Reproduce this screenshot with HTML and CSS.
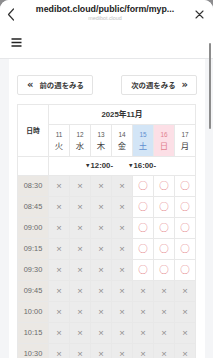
FILE: index.html
```html
<!DOCTYPE html>
<html lang="ja">
<head>
<meta charset="utf-8">
<title>medibot.cloud</title>
<link rel="stylesheet" href="styles.css">
</head>
<body>
<div class="sheet">
  <div class="topbar">
    <svg class="back" width="8" height="13" viewBox="0 0 8 13"><path d="M6.5 1 L1.5 6.5 L6.5 12" fill="none" stroke="#333" stroke-width="1.2" stroke-linecap="round" stroke-linejoin="round"/></svg>
    <div class="url">
      <div class="url-main">medibot.cloud/public/form/myp...</div>
      <div class="url-sub">medibot.cloud</div>
    </div>
    <svg class="close" width="9" height="9" viewBox="0 0 9 9"><path d="M1 1 L8 8 M8 1 L1 8" fill="none" stroke="#333" stroke-width="1.1" stroke-linecap="round"/></svg>
  </div>
  <div class="pagehead">
    <svg class="menu" width="11" height="9" viewBox="0 0 11 9"><path d="M0.5 1 H10.5 M0.5 4.5 H10.5 M0.5 8 H10.5" stroke="#222" stroke-width="1.3"/></svg>
  </div>
  <main class="content">
    <div class="panel">
      <div class="nav">
        <button class="navbtn"><span class="arr">«</span>前の週をみる</button>
        <button class="navbtn next">次の週をみる<span class="arr">»</span></button>
      </div>
      <table class="cal">
        <colgroup><col class="c-time"><col class="c-day"><col class="c-day"><col class="c-day"><col class="c-day"><col class="c-day"><col class="c-day"><col class="c-day"></colgroup>
        <tr class="r-month">
          <th class="h-dt" rowspan="2">日時</th>
          <th class="h-month" colspan="7">2025年11月</th>
        </tr>
        <tr class="r-days">
          <th class="d"><span class="dn">11</span><span class="dw">火</span></th>
          <th class="d"><span class="dn">12</span><span class="dw">水</span></th>
          <th class="d"><span class="dn">13</span><span class="dw">木</span></th>
          <th class="d"><span class="dn">14</span><span class="dw">金</span></th>
          <th class="d sat"><span class="dn">15</span><span class="dw">土</span></th>
          <th class="d sun"><span class="dn">16</span><span class="dw">日</span></th>
          <th class="d"><span class="dn">17</span><span class="dw">月</span></th>
        </tr>
        <tr class="r-marks">
          <td class="blank"></td>
          <td class="marks" colspan="7"><div class="marks-in"><span class="mk"><span class="tri">▼</span>12:00-</span><span class="mk"><span class="tri">▼</span>16:00-</span></div></td>
        </tr>
        <tr class="r-slot"><td class="t">08:30</td><td class="x">×</td><td class="x">×</td><td class="x">×</td><td class="x">×</td><td class="o">○</td><td class="o">○</td><td class="o">○</td></tr>
        <tr class="r-slot"><td class="t">08:45</td><td class="x">×</td><td class="x">×</td><td class="x">×</td><td class="x">×</td><td class="o">○</td><td class="o">○</td><td class="o">○</td></tr>
        <tr class="r-slot"><td class="t">09:00</td><td class="x">×</td><td class="x">×</td><td class="x">×</td><td class="x">×</td><td class="o">○</td><td class="o">○</td><td class="o">○</td></tr>
        <tr class="r-slot"><td class="t">09:15</td><td class="x">×</td><td class="x">×</td><td class="x">×</td><td class="x">×</td><td class="o">○</td><td class="o">○</td><td class="o">○</td></tr>
        <tr class="r-slot"><td class="t">09:30</td><td class="x">×</td><td class="x">×</td><td class="x">×</td><td class="x">×</td><td class="o">○</td><td class="o">○</td><td class="o">○</td></tr>
        <tr class="r-slot"><td class="t">09:45</td><td class="x">×</td><td class="x">×</td><td class="x">×</td><td class="x">×</td><td class="x">×</td><td class="x">×</td><td class="x">×</td></tr>
        <tr class="r-slot"><td class="t">10:00</td><td class="x">×</td><td class="x">×</td><td class="x">×</td><td class="x">×</td><td class="x">×</td><td class="x">×</td><td class="x">×</td></tr>
        <tr class="r-slot"><td class="t">10:15</td><td class="x">×</td><td class="x">×</td><td class="x">×</td><td class="x">×</td><td class="x">×</td><td class="x">×</td><td class="x">×</td></tr>
        <tr class="r-slot"><td class="t">10:30</td><td class="x">×</td><td class="x">×</td><td class="x">×</td><td class="x">×</td><td class="x">×</td><td class="x">×</td><td class="x">×</td></tr>
      </table>
    </div>
  </main>
  <div class="scrollbar"></div>
</div>
</body>
</html>
```
FILE: styles.css
```css
* { box-sizing: border-box; }
html, body {
  margin: 0;
  padding: 0;
  height: 100%;
  overflow: hidden;
  background: #8d8d8f;
}
body {
  font-family: "Liberation Sans", "Noto Sans CJK JP", sans-serif;
  color: #333;
}
.sheet {
  position: relative;
  height: 100%;
  background: #f4f5f7;
  border-radius: 9px 9px 0 0;
  overflow: hidden;
}
.topbar {
  height: 28px;
  background: #fff;
  display: flex;
  align-items: flex-start;
  padding: 0 9px 0 7px;
}
.back { margin-top: 8px; flex: none; }
.close { margin-top: 10px; flex: none; }
.url {
  flex: 1;
  text-align: center;
  padding-top: 5px;
  line-height: 1;
}
.url-main {
  font-size: 8.8px;
  font-weight: bold;
  color: #222;
}
.url-sub {
  font-size: 5.4px;
  color: #c2c2c2;
  margin-top: 2px;
}
.pagehead {
  height: 31px;
  background: #fff;
  border-bottom: 1px solid #e6e7e9;
  padding: 10px 0 0 11px;
}
.menu { display: block; }
.content {
  padding: 0 8px 0 9px;
}
.panel {
  background: #fff;
  padding: 16px 8px 0 8px;
  min-height: 400px;
}
.nav {
  display: flex;
  justify-content: space-between;
  margin-bottom: 9px;
}
.navbtn {
  width: 76px;
  height: 20px;
  border: 1px solid #e3e3e3;
  border-radius: 2px;
  background: #fff;
  font-family: "Noto Sans CJK JP", sans-serif;
  font-size: 7.4px;
  font-weight: bold;
  color: #3a3a3a;
  padding: 0 0 0 9px;
  display: flex;
  align-items: center;
  line-height: 1;
}
.navbtn.next {
  justify-content: flex-end;
  padding: 0 8px 0 0;
}
.arr {
  font-family: "DejaVu Sans", sans-serif;
  font-size: 10px;
  font-weight: bold;
  color: #333;
  margin-right: 6px;
  position: relative;
  top: -0.5px;
}
.navbtn.next .arr {
  margin-right: 0;
  margin-left: 6px;
}
.cal {
  width: 178px;
  table-layout: fixed;
  border-collapse: collapse;
  font-family: "Liberation Sans", "Noto Sans CJK JP", sans-serif;
}
.c-time { width: 31px; }
.c-day { width: 21px; }
.cal th, .cal td {
  border: 1px solid #e8e8e8;
  padding: 0;
  text-align: center;
  vertical-align: middle;
  line-height: 1;
}
.h-dt {
  font-size: 6.8px;
  font-weight: bold;
  color: #333;
  font-family: "Noto Sans CJK JP", sans-serif;
}
.r-month { height: 20px; }
.h-month {
  font-size: 7.8px;
  font-weight: bold;
  color: #333;
}
.r-days { height: 32px; }
.d { font-weight: normal; }
.dn {
  display: block;
  font-size: 6.4px;
  color: #555;
  margin-bottom: 2px;
}
.dw {
  display: block;
  font-family: "Noto Sans CJK JP", sans-serif;
  font-size: 8.4px;
  color: #444;
}
.sat { background: #d3e5f6; }
.sat .dn, .sat .dw { color: #5f8fd0; }
.sun { background: #fcdfe6; }
.sun .dn, .sun .dw { color: #e17f90; }
.r-marks { height: 19px; }
.marks-in {
  display: flex;
  gap: 16px;
  padding-left: 37px;
  align-items: center;
}
.mk {
  font-size: 7.8px;
  font-weight: bold;
  color: #333;
  display: flex;
  align-items: center;
}
.tri {
  font-family: "DejaVu Sans", sans-serif;
  font-size: 4.5px;
  margin-right: 1px;
}
.r-slot { height: 21px; }
.t {
  background: #ebe8e4;
  color: #6a6a6a;
  font-size: 7.4px;
}
.x {
  background: #ececec;
  color: #8f8f8f;
  font-size: 9.5px;
}
.o {
  background: #fff;
  color: #e06e72;
  font-family: "Noto Sans CJK JP", sans-serif;
  font-size: 9.5px;
}
.scrollbar {
  position: absolute;
  left: 209px;
  top: 43px;
  width: 2px;
  height: 86px;
  border-radius: 1px;
  background: #8c8c8c;
}
```
